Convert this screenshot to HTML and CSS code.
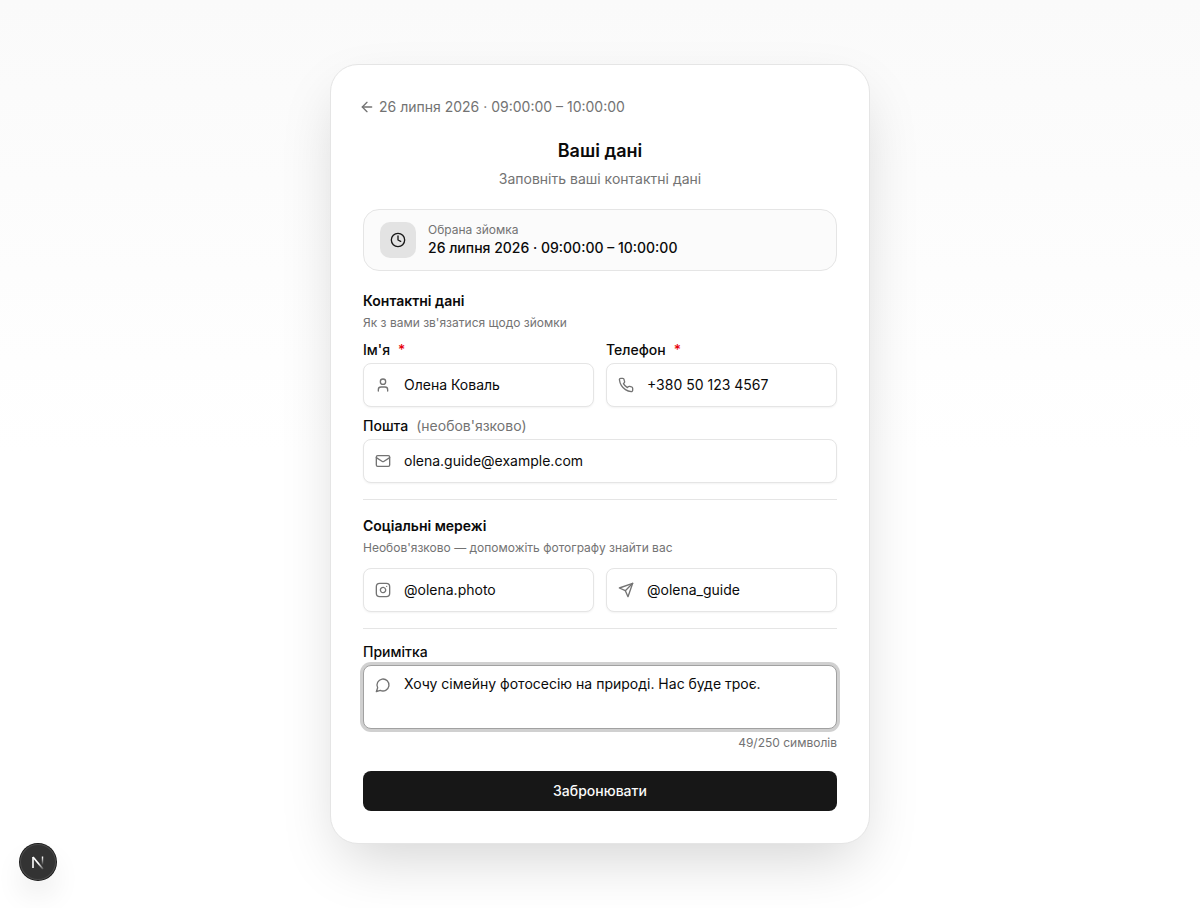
FILE: index.html
```
<!DOCTYPE html>
<html lang="uk">
<head>
    <meta charset="UTF-8">
    <meta name="viewport" content="width=device-width, initial-scale=1.0">
    <title>Ваші дані</title>
    <link rel="stylesheet" href="styles.css">
</head>
<body>
    <main class="page">
        <form class="card">
            <button type="button" class="back-btn">
                <svg class="icon" viewBox="0 0 24 24"><path d="m12 19-7-7 7-7"/><path d="M19 12H5"/></svg>
                26 липня 2026 · 09:00:00 – 10:00:00
            </button>

            <div class="header">
                <h1>Ваші дані</h1>
                <p>Заповніть ваші контактні дані</p>
            </div>

            <div class="summary">
                <div class="summary-icon">
                    <svg class="icon" viewBox="0 0 24 24"><circle cx="12" cy="12" r="10"/><path d="M12 6v6l4 2"/></svg>
                </div>
                <div>
                    <div class="summary-label">Обрана зйомка</div>
                    <div class="summary-value">26 липня 2026 · 09:00:00 – 10:00:00</div>
                </div>
            </div>

            <section class="section">
                <div class="section-head">
                    <h2>Контактні дані</h2>
                    <p>Як з вами зв'язатися щодо зйомки</p>
                </div>
                <div class="row">
                    <div class="field">
                        <label for="name">Ім'я <span class="required">*</span></label>
                        <div class="control">
                            <svg class="icon" viewBox="0 0 24 24"><path d="M19 21v-2a4 4 0 0 0-4-4H9a4 4 0 0 0-4 4v2"/><circle cx="12" cy="7" r="4"/></svg>
                            <input type="text" id="name" value="Олена Коваль">
                        </div>
                    </div>
                    <div class="field">
                        <label for="phone">Телефон <span class="required">*</span></label>
                        <div class="control">
                            <svg class="icon" viewBox="0 0 24 24"><path d="M22 16.92v3a2 2 0 0 1-2.18 2 19.79 19.79 0 0 1-8.63-3.07 19.5 19.5 0 0 1-6-6 19.79 19.79 0 0 1-3.07-8.67A2 2 0 0 1 4.11 2h3a2 2 0 0 1 2 1.72 12.84 12.84 0 0 0 .7 2.81 2 2 0 0 1-.45 2.11L8.09 9.91a16 16 0 0 0 6 6l1.27-1.27a2 2 0 0 1 2.11-.45 12.84 12.84 0 0 0 2.81.7A2 2 0 0 1 22 16.92z"/></svg>
                            <input type="tel" id="phone" value="+380 50 123 4567">
                        </div>
                    </div>
                </div>
                <div class="field">
                    <label for="email">Пошта <span class="optional">(необов'язково)</span></label>
                    <div class="control">
                        <svg class="icon" viewBox="0 0 24 24"><rect x="2" y="4" width="20" height="16" rx="2"/><path d="m22 7-8.97 5.7a1.94 1.94 0 0 1-2.06 0L2 7"/></svg>
                        <input type="email" id="email" value="olena.guide@example.com">
                    </div>
                </div>
            </section>

            <hr>

            <section class="section">
                <div class="section-head">
                    <h2>Соціальні мережі</h2>
                    <p>Необов'язково — допоможіть фотографу знайти вас</p>
                </div>
                <div class="row">
                    <div class="control">
                        <svg class="icon" viewBox="0 0 24 24"><rect x="2" y="2" width="20" height="20" rx="5"/><path d="M16 11.37A4 4 0 1 1 12.63 8 4 4 0 0 1 16 11.37z"/><path d="M17.5 6.5h.01"/></svg>
                        <input type="text" id="instagram" aria-label="Instagram" value="@olena.photo">
                    </div>
                    <div class="control">
                        <svg class="icon" viewBox="0 0 24 24"><path d="m22 2-7 20-4-9-9-4Z"/><path d="M22 2 11 13"/></svg>
                        <input type="text" id="telegram" aria-label="Telegram" value="@olena_guide">
                    </div>
                </div>
            </section>

            <hr>

            <div class="field">
                <label for="note">Примітка</label>
                <div class="control control-note">
                    <svg class="icon" viewBox="0 0 24 24"><path d="M7.9 20A9 9 0 1 0 4 16.1L2 22Z"/></svg>
                    <textarea id="note" maxlength="250">Хочу сімейну фотосесію на природі. Нас буде троє.</textarea>
                </div>
                <div class="counter">49/250 символів</div>
            </div>

            <button type="submit" class="submit-btn">Забронювати</button>
        </form>
    </main>

    <button type="button" class="dev-badge" aria-label="Next.js">
        <svg viewBox="0 0 36 36">
            <defs>
                <linearGradient id="fade-diagonal" gradientUnits="userSpaceOnUse" x1="19" y1="19" x2="24" y2="25">
                    <stop offset="0" stop-color="#fff"/>
                    <stop offset="1" stop-color="#fff" stop-opacity="0.1"/>
                </linearGradient>
                <linearGradient id="fade-stem" gradientUnits="userSpaceOnUse" x1="0" y1="13" x2="0" y2="21">
                    <stop offset="0" stop-color="#fff"/>
                    <stop offset="1" stop-color="#fff" stop-opacity="0"/>
                </linearGradient>
            </defs>
            <path d="M13 24V13" stroke="#fff" stroke-width="1.6"/>
            <path d="M13 13L23 25" stroke="url(#fade-diagonal)" stroke-width="1.7"/>
            <path d="M22.5 12.5V21" stroke="url(#fade-stem)" stroke-width="1.4"/>
        </svg>
    </button>
</body>
</html>
```
FILE: styles.css
```
* {
    box-sizing: border-box;
}
body {
    margin: 0;
    font-family: Inter, "Liberation Sans", sans-serif;
    font-size: 14px;
    line-height: 20px;
    color: #0a0a0a;
    background: white;
}
h1, h2, p {
    margin: 0;
}
input, textarea, button {
    font: inherit;
    color: inherit;
}
.page {
    min-height: 100vh;
    display: flex;
    align-items: center;
    justify-content: center;
    padding: 32px 16px;
    background: linear-gradient(to bottom, #fafafa, #fff 50%);
}
.card {
    width: 100%;
    max-width: 540px;
    padding: 32px;
    background: white;
    border: 1px solid #e5e5e5;
    border-radius: 28px;
    box-shadow: 0 24px 60px -12px rgba(0,0,0,0.18);
}
.icon {
    width: 16px;
    height: 16px;
    flex: none;
    fill: none;
    stroke: currentColor;
    stroke-width: 2;
    stroke-linecap: round;
    stroke-linejoin: round;
}
.back-btn {
    display: flex;
    align-items: center;
    gap: 4px;
    margin: 0 0 20px -4px;
    padding: 0;
    border: none;
    background: none;
    color: #737373;
    cursor: pointer;
}
.header {
    text-align: center;
    margin-bottom: 20px;
}
.header h1 {
    margin-bottom: 4px;
    font-size: 18px;
    line-height: 28px;
    font-weight: 600;
}
.header p {
    color: #737373;
}
.summary {
    display: flex;
    align-items: center;
    gap: 12px;
    margin-bottom: 20px;
    padding: 12px 16px;
    background: #fbfbfb;
    border: 1px solid #e5e5e5;
    border-radius: 16px;
}
.summary-icon {
    display: flex;
    align-items: center;
    justify-content: center;
    width: 36px;
    height: 36px;
    border-radius: 10px;
    background: #e3e3e3;
    color: #171717;
}
.summary-label {
    font-size: 12px;
    line-height: 16px;
    color: #737373;
}
.summary-value {
    font-weight: 500;
}
.section {
    display: flex;
    flex-direction: column;
    gap: 12px;
}
.section-head h2 {
    margin-bottom: 4px;
    font-size: 14px;
    line-height: 20px;
    font-weight: 600;
}
.section-head p {
    font-size: 12px;
    line-height: 16px;
    color: #737373;
}
.row {
    display: grid;
    grid-template-columns: repeat(2, minmax(0, 1fr));
    gap: 12px;
}
.field {
    display: flex;
    flex-direction: column;
    gap: 6px;
}
.field label {
    display: flex;
    gap: 8px;
    line-height: 14px;
    font-weight: 500;
}
.required {
    color: #e7000b;
}
.optional {
    font-weight: 400;
    color: #737373;
}
.control {
    display: flex;
    align-items: center;
    min-width: 0;
    padding-left: 11px;
    border: 1px solid #e5e5e5;
    border-radius: 8px;
    background: white;
    box-shadow: 0 1px 2px rgba(0,0,0,0.05);
    color: #737373;
}
.control input, .control textarea {
    flex: 1;
    min-width: 0;
    padding: 8px 12px 8px 13px;
    border: none;
    outline: none;
    background: none;
    color: #0a0a0a;
}
.control input {
    height: 42px;
    padding-bottom: 10px;
}
.control-note {
    align-items: flex-start;
    border-color: #a1a1a1;
    box-shadow: 0 0 0 3px rgba(161,161,161,0.5);
}
.control-note .icon {
    margin-top: 11px;
}
.control textarea {
    height: 62px;
    resize: none;
}
hr {
    height: 1px;
    margin: 16px 0;
    border: none;
    background: #e5e5e5;
}
.counter {
    font-size: 12px;
    line-height: 16px;
    text-align: right;
    color: #737373;
}
.submit-btn {
    width: 100%;
    height: 40px;
    margin-top: 20px;
    border: none;
    border-radius: 8px;
    background: #171717;
    color: #fafafa;
    font-weight: 500;
    cursor: pointer;
}
.dev-badge {
    position: fixed;
    left: 20px;
    bottom: 28px;
    width: 36px;
    height: 36px;
    padding: 0;
    border: none;
    border-radius: 50%;
    background: #333;
    box-shadow: 0 0 0 1px #171717, inset 0 0 0 1px #4a4a4a, 0 16px 32px -8px rgba(0,0,0,0.24);
}
.dev-badge svg {
    display: block;
    fill: none;
}
```
